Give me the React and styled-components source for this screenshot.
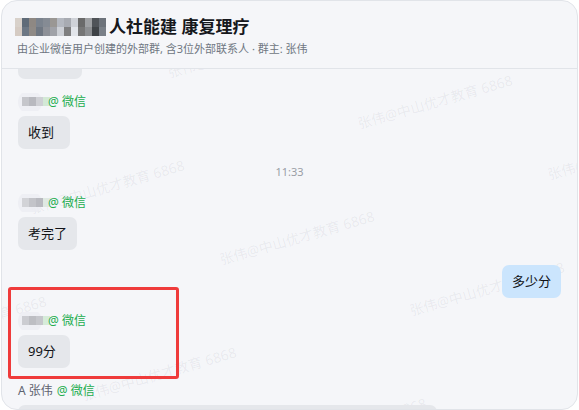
import React from 'react';
import styled, { createGlobalStyle } from 'styled-components';

const GlobalStyle = createGlobalStyle`
  html, body {
    margin: 0;
    padding: 0;
    background: #ffffff;
  }
  body {
    font-family: "Noto Sans", "Noto Sans CJK SC", sans-serif;
    color: #1f2329;
  }
`;

const titleMosaic = [
  ['#d8d1ca', '#5f6b78', '#8e8883', '#7b838e', '#858b94', '#9a9794', '#b4b8c0', '#a8abb2', '#cfd2d8', '#6a6a6a', '#9ea0a3', '#4f5358', '#6d737b'],
  ['#d5cbc3', '#6c7784', '#8f8a86', '#6f7782', '#8e9198', '#a0a2a8', '#cdd0d6', '#7f7f80', '#e2e5ea', '#767676', '#8d8f92', '#3f4347', '#7a8088'],
];

const senderBlurs = [
  ['#c5c6cb', '#b8b9bf', '#cfd0d5', '#d3e9d6'],
  ['#d2d3d7', '#c3c4c9', '#b9bac0', '#dfe9e2'],
  ['#cbccd1', '#bdbec3', '#c6c7cc', '#d6ecd9'],
];

// watermark grid, measured from the screenshot (page coordinates)
const marks = [];
for (let i = -3; i <= 4; i++) {
  for (let j = -2; j <= 2; j++) {
    const x = 220 + i * 190 - j * 138;
    const y = 267 + i * 51 + j * 136 - 69;
    if (x + 170 < 0 || x > 580 || y < 0 || y - 50 > 345) continue;
    marks.push({ x, y, key: `${i}-${j}` });
  }
}

function Mosaic({ rows, cell = 7, rowHeight = 9 }) {
  return (
    <MosaicSvg
      width={rows[0].length * cell}
      height={rows.length * rowHeight}
      viewBox={`0 0 ${rows[0].length * cell} ${rows.length * rowHeight}`}
    >
      {rows.map((row, ri) =>
        row.map((c, ci) => (
          <rect key={`${ri}-${ci}`} x={ci * cell} y={ri * rowHeight} width={cell} height={rowHeight} fill={c} />
        ))
      )}
    </MosaicSvg>
  );
}

function SenderBlur({ colors }) {
  return (
    <svg width="32" height="18" viewBox="0 0 32 18">
      <circle cx="12" cy="9" r="12" fill="#eceef2" opacity="0.8" />
      {colors.map((c, i) => (
        <rect key={i} x={4 + i * 7} y="4" width="7" height="9" fill={c} />
      ))}
    </svg>
  );
}

function Sender({ blur, name }) {
  return (
    <SenderLine>
      {blur ? <SenderBlur colors={blur} /> : <SenderName>{name}</SenderName>}
      <Channel $tight={!!blur}>@ 微信</Channel>
    </SenderLine>
  );
}

function App() {
  return (
    <>
      <GlobalStyle />
      <Window>
        <Header>
          <TitleRow>
            <Mosaic rows={titleMosaic} />
            <Title>人社能建 康复理疗</Title>
          </TitleRow>
          <Subtitle>由企业微信用户创建的外部群, 含3位外部联系人 · 群主: 张伟</Subtitle>
        </Header>

        <Messages>
          <WatermarkLayer>
            {marks.map((m) => (
              <Watermark key={m.key} style={{ left: m.x, top: m.y - 14 }}>
                张伟@中山优才教育 6868
              </Watermark>
            ))}
          </WatermarkLayer>

          <List>
            <Group>
              <Bubble $width={64} />
            </Group>

            <Group>
              <Sender blur={senderBlurs[0]} />
              <Bubble>收到</Bubble>
            </Group>

            <Time>11:33</Time>

            <Group>
              <Sender blur={senderBlurs[1]} />
              <Bubble>考完了</Bubble>
            </Group>

            <Group $self>
              <Bubble $self>多少分</Bubble>
            </Group>

            <Group>
              <Highlight />
              <Sender blur={senderBlurs[2]} />
              <Bubble>99分</Bubble>
            </Group>

            <Group>
              <Sender name="A 张伟" />
              <Bubble $width={419} />
            </Group>
          </List>
        </Messages>
      </Window>
    </>
  );
}

const Window = styled.div`
  box-sizing: border-box;
  width: 577px;
  height: 410px;
  margin-left: 1px;
  display: flex;
  flex-direction: column;
  background: #f5f6f9;
  border: 1px solid #e1e4e9;
  border-radius: 16px;
  overflow: hidden;
`;

const Header = styled.header`
  box-sizing: border-box;
  height: 68px;
  flex: none;
  padding: 15px 15px 0;
  border-bottom: 1px solid #e1e4e9;
`;

const TitleRow = styled.div`
  display: flex;
  align-items: center;
  height: 22px;
`;

const MosaicSvg = styled.svg`
  display: block;
  margin-left: -2px;
`;

const Title = styled.h1`
  margin: 0 0 0 3px;
  font-size: 17px;
  line-height: 22px;
  font-weight: 700;
  color: #16181c;
`;

const Subtitle = styled.div`
  margin-top: 3px;
  font-size: 11px;
  line-height: 16px;
  color: #6f7682;
  white-space: nowrap;
`;

const Messages = styled.main`
  position: relative;
  flex: 1;
  overflow: hidden;
`;

const WatermarkLayer = styled.div`
  position: absolute;
  inset: 0;
  pointer-events: none;
  z-index: 0;
`;

const Watermark = styled.span`
  position: absolute;
  white-space: nowrap;
  font-size: 14px;
  line-height: 14px;
  color: rgba(70, 80, 100, 0.08);
  transform: rotate(-16deg);
  transform-origin: 0 100%;
`;

const List = styled.div`
  position: relative;
  z-index: 1;
  display: flex;
  flex-direction: column;
  gap: 15px;
  padding: 0 16px;
  margin-top: -23px;
`;

const Group = styled.div`
  position: relative;
  display: flex;
  flex-direction: column;
  align-items: ${(p) => (p.$self ? 'flex-end' : 'flex-start')};
  gap: 6px;
`;

const SenderLine = styled.div`
  display: flex;
  align-items: center;
  height: 16px;
  font-size: 12px;
  line-height: 16px;
`;

const SenderName = styled.span`
  color: #5d6370;
  margin-right: 4px;
`;

const Channel = styled.span`
  color: #22ad4e;
  margin-left: ${(p) => (p.$tight ? '-2px' : '0')};
`;

const Bubble = styled.div`
  box-sizing: border-box;
  min-width: 52px;
  min-height: 33px;
  width: ${(p) => (p.$width ? `${p.$width}px` : 'auto')};
  padding: 7px 10px;
  font-size: 13px;
  line-height: 19px;
  color: #111317;
  background: ${(p) => (p.$self ? '#cbe5fd' : '#e5e7eb')};
  border-radius: 7px;
`;

const Time = styled.div`
  text-align: center;
  font-size: 11px;
  line-height: 16px;
  color: #9a9ea6;
`;

const Highlight = styled.div`
  position: absolute;
  top: -26px;
  left: -10px;
  width: 171px;
  height: 92px;
  box-sizing: border-box;
  border: 3px solid #ef3b3b;
  border-radius: 3px;
  pointer-events: none;
`;

export default App;
